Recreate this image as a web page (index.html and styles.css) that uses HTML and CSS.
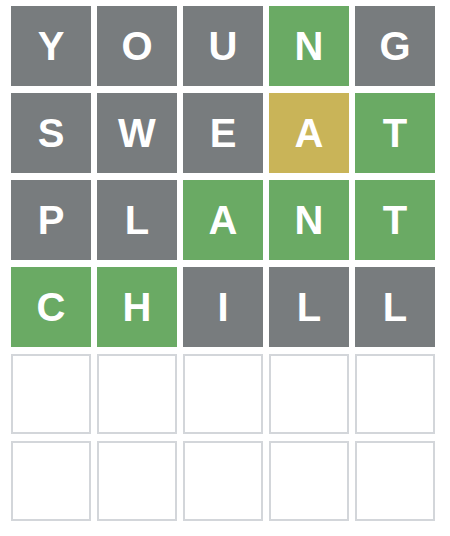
FILE: index.html
```html
<!DOCTYPE html>
<html lang="en">
<head>
<meta charset="utf-8">
<title>Wordle board</title>
<link rel="stylesheet" href="styles.css">
</head>
<body>
<div class="board">
  <div class="row">
    <div class="tile absent">Y</div>
    <div class="tile absent">O</div>
    <div class="tile absent">U</div>
    <div class="tile correct">N</div>
    <div class="tile absent">G</div>
  </div>
  <div class="row">
    <div class="tile absent">S</div>
    <div class="tile absent">W</div>
    <div class="tile absent">E</div>
    <div class="tile present">A</div>
    <div class="tile correct">T</div>
  </div>
  <div class="row">
    <div class="tile absent">P</div>
    <div class="tile absent">L</div>
    <div class="tile correct">A</div>
    <div class="tile correct">N</div>
    <div class="tile correct">T</div>
  </div>
  <div class="row">
    <div class="tile correct">C</div>
    <div class="tile correct">H</div>
    <div class="tile absent">I</div>
    <div class="tile absent">L</div>
    <div class="tile absent">L</div>
  </div>
  <div class="row">
    <div class="tile empty"></div>
    <div class="tile empty"></div>
    <div class="tile empty"></div>
    <div class="tile empty"></div>
    <div class="tile empty"></div>
  </div>
  <div class="row">
    <div class="tile empty"></div>
    <div class="tile empty"></div>
    <div class="tile empty"></div>
    <div class="tile empty"></div>
    <div class="tile empty"></div>
  </div>
</div>
</body>
</html>
```

FILE: styles.css
```css
html, body {
  margin: 0;
  padding: 0;
  background: #ffffff;
}

.board {
  display: grid;
  grid-template-rows: repeat(6, 80px);
  row-gap: 7px;
  padding: 6px 0 0 11px;
}

.row {
  display: grid;
  grid-template-columns: repeat(5, 80px);
  column-gap: 6px;
}

.tile {
  box-sizing: border-box;
  width: 80px;
  height: 80px;
  display: flex;
  align-items: center;
  justify-content: center;
  font-family: "Liberation Sans", Arial, sans-serif;
  font-weight: bold;
  font-size: 40px;
  color: #ffffff;
  line-height: 1;
}

.absent { background: #787c7e; }
.correct { background: #6aaa64; }
.present { background: #c9b458; }

.empty {
  background: #ffffff;
  border: 2px solid #d3d6da;
}
```
